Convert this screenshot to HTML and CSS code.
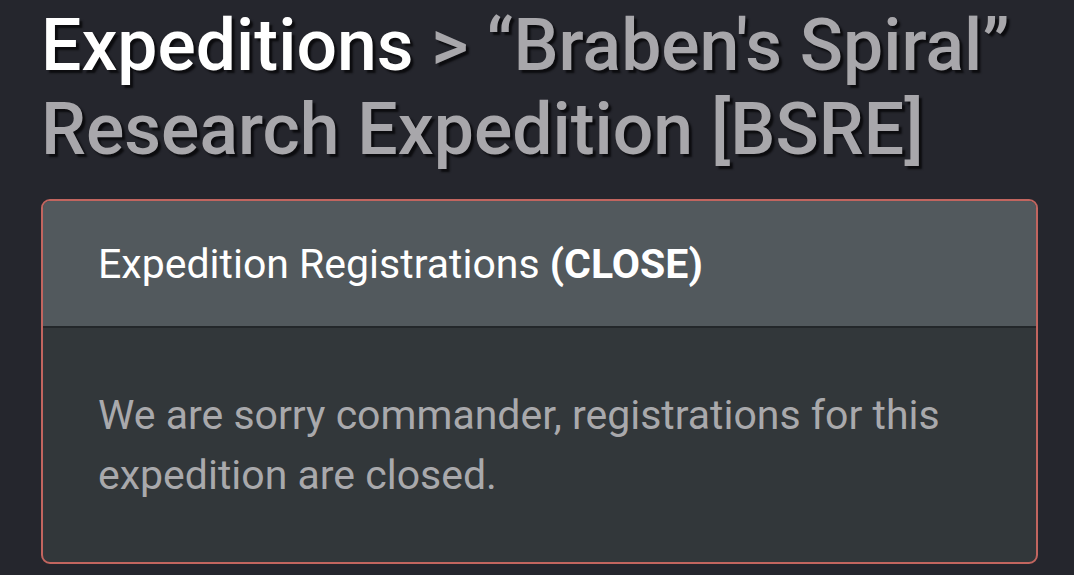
FILE: index.html
```html
<!DOCTYPE html>
<html lang="en">
<head>
    <meta charset="UTF-8">
    <meta name="viewport" content="width=device-width, initial-scale=1.0">
    <title>Braben's Spiral Research Expedition</title>
    <link rel="stylesheet" href="styles.css">
</head>
<body>
    <div class="container">
        <h1 class="page-title">
            <a href="#" class="crumb">Expeditions</a>
            &gt; &ldquo;Braben's Spiral&rdquo; Research Expedition [BSRE]
        </h1>

        <div class="card">
            <div class="card-header">
                Expedition Registrations <strong>(CLOSE)</strong>
            </div>
            <div class="card-body">
                <p class="card-text">We are sorry commander, registrations for this expedition are closed.</p>
            </div>
        </div>
    </div>
</body>
</html>
```

FILE: styles.css
```css
html, body {
    margin: 0;
    padding: 0;
}
body {
    background-color: #25262d;
    font-family: Roboto, "Liberation Sans", Arial, sans-serif;
    font-size: 41px;
    line-height: 60px;
    color: #a9a9ac;
}
.container {
    padding: 4px 36px 0 41px;
}
.page-title {
    margin: 0 0 27px 0;
    font-size: 71.5px;
    font-weight: 500;
    line-height: 84px;
    color: #a8a7ab;
    text-shadow: 3px 3px 2px #0c0c0f;
}
.crumb {
    color: #ffffff;
    text-decoration: none;
}
.card {
    border: 2px solid #c2655f;
    border-radius: 9px;
    background-color: #32373a;
    overflow: hidden;
}
.card-header {
    background-color: #52595d;
    color: #ffffff;
    padding: 33px 55px 32px;
    border-bottom: 2px solid #23272a;
}
.card-header strong {
    font-weight: 700;
}
.card-body {
    padding: 57px 55px 57px;
}
.card-text {
    margin: 0;
}
```
